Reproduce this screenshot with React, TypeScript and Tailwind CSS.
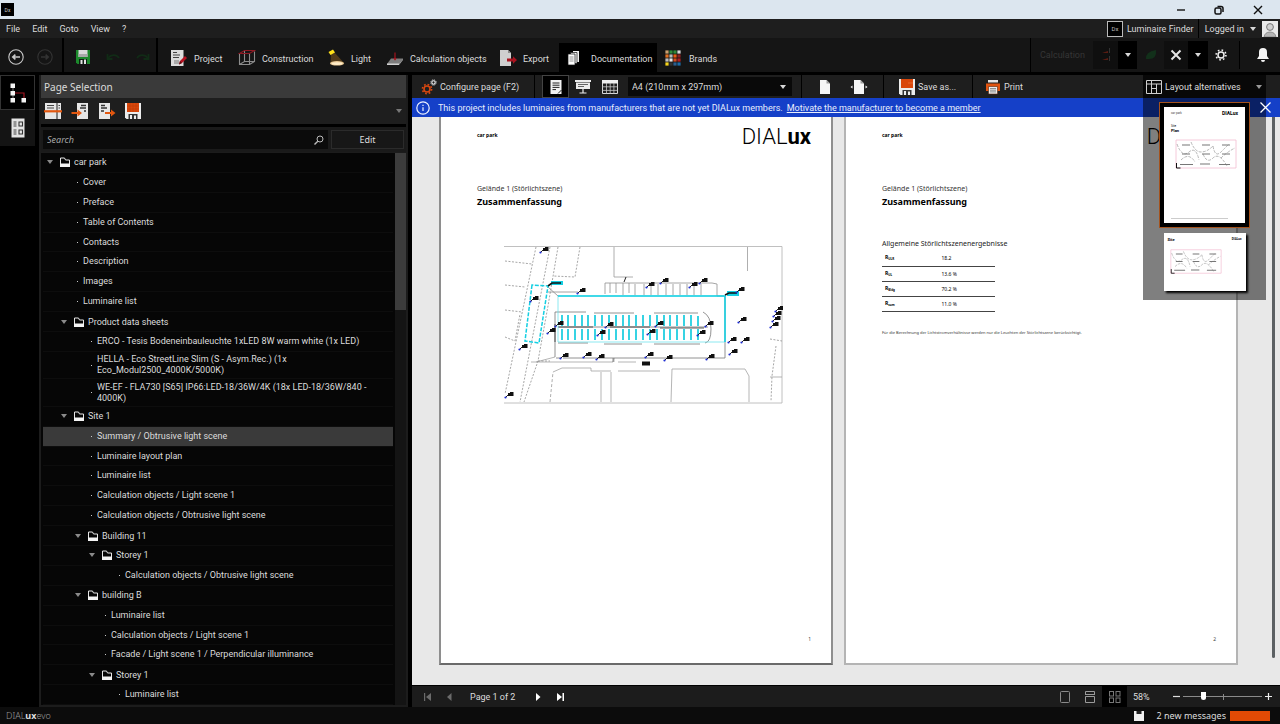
import type { ReactNode } from "react";

/* ---------- small icons ---------- */

const BackIcon = ({ flip = false }: { flip?: boolean }) => (
  <svg viewBox="0 0 16 16" className={flip ? "size-4 rotate-180 text-[#333]" : "size-4 text-[#c9c9c9]"} fill="none" stroke="currentColor">
    <circle cx="8" cy="8" r="7.2" strokeWidth="1.1" />
    <path d="M12 8H5M7.4 5.6 4.8 8l2.6 2.4" strokeWidth="1.6" />
  </svg>
);

const SaveIcon = () => (
  <svg viewBox="0 0 16 16" className="size-4">
    <path d="M1 1h14v14H2.500L1 13.500z" fill="#1c8a2c" />
    <path d="M3.500 1h9v7h-9z" fill="#d9d9d9" />
    <path d="M3.500 5h9v3h-9z" fill="#a9a9a9" />
    <path d="M4 10h8v5H4z" fill="#0d1f10" />
    <path d="M5.500 11h2v4h-2zM9 10.500h2V15H9z" fill="#e2e2e2" />
  </svg>
);

const UndoIcon = ({ flip = false }: { flip?: boolean }) => (
  <svg viewBox="0 0 16 10" className={flip ? "h-2.5 w-4 -scale-x-100" : "h-2.5 w-4"} fill="none" stroke="#112b16" strokeWidth="1.8">
    <path d="M3 6c3-3.500 8-4 11 0" />
    <path d="M2.500 2v5h5" />
  </svg>
);

const ProjectIcon = () => (
  <svg viewBox="0 0 18 18" className="size-[18px]">
    <path d="M1 1h12.500v16H1z" fill="#dcdcdc" />
    <path d="M3 3.500h4M3 6h7M3 8.500h6" stroke="#444" strokeWidth="1" />
    <path d="M4 11h5v4H4z" fill="#aaa" />
    <path d="m9 15.500 1-3.500 5-5 2 2-5 5z" fill="#b81222" />
    <path d="m9 15.500 1-3.500 2 2z" fill="#5a0c10" />
  </svg>
);

const CubeIcon = () => (
  <svg viewBox="0 0 18 18" className="size-[18px]" fill="none" strokeWidth="1.1">
    <path d="M1.500 4.500v11h10v-11M11.500 15.500l5-3v-10M1.500 15.500l5-3h10M6.500 2v10.500" stroke="#8c8c8c" />
    <path d="M1.500 4.500h10l5-3h-10z" stroke="#8e1a24" />
  </svg>
);

const LightIcon = () => (
  <svg viewBox="0 0 18 18" className="size-[18px]">
    <path d="M4 5 3.500 14.500h14L8 4z" fill="#6b4a1c" opacity=".7" />
    <ellipse cx="10" cy="14.300" rx="7" ry="2.300" fill="#e8c894" />
    <ellipse cx="10" cy="14.600" rx="5.500" ry="1.400" fill="#ffecc8" />
    <path d="m1.500 3 4.500-2.500 2 3-4.500 2.500z" fill="#ffe11a" />
  </svg>
);

const PlaneIcon = () => (
  <svg viewBox="0 0 18 18" className="size-[18px]">
    <path d="M5 9.500h12l-4 5.500H1z" fill="#7c7c7c" />
    <path d="M1 14.500h12v1.500H1z" fill="#d0d0d0" />
    <path d="m13 14.500 4-5v1.500l-4 5z" fill="#a0a0a0" />
    <path d="M9 3.500v7" stroke="#a3141e" strokeWidth="1.200" />
    <path d="m7.300 9 1.700 2.700L10.700 9z" fill="#a3141e" />
  </svg>
);

const ExportIcon = () => (
  <svg viewBox="0 0 18 18" className="size-[18px]">
    <path d="M1 1h8l3 3v13H1z" fill="#cfcfcf" />
    <path d="M9 1v3h3z" fill="#8b8b8b" />
    <path d="M8 9.500h6V7.300l4 3.700-4 3.700v-2.200H8z" fill="#a8121e" />
  </svg>
);

const DocsIcon = () => (
  <svg viewBox="0 0 14 16" className="h-4 w-3.5">
    <path d="M6 1h6v11H6z" fill="#f4f4f4" />
    <path d="M3.500 2.500H10v11H3.500z" fill="#f4f4f4" stroke="#111" strokeWidth=".7" />
    <path d="M1 4h7v11H1z" fill="#fff" stroke="#111" strokeWidth=".7" />
    <path d="M2.500 7h4M2.500 9h4M2.500 11h4" stroke="#777" strokeWidth=".8" />
  </svg>
);

const BRAND_COLORS = [
  "#c9a070", "#2e8b3a", "#2e8b3a", "#d8d8d8",
  "#e07020", "#b8b8b8", "#e85a10", "#8c2020",
  "#bdbdbd", "#e8e8e8", "#d04a20", "#b02020",
  "#f4d21a", "#303030", "#2a5f90", "#1c6ca6",
];

const BrandsIcon = () => (
  <svg viewBox="0 0 16 16" className="size-4">
    {BRAND_COLORS.map((c, i) => (
      <rect key={i} x={(i % 4) * 4 + 0.4} y={Math.floor(i / 4) * 4 + 0.4} width="3.200" height="3.200" fill={c} />
    ))}
  </svg>
);

const GearsIcon = () => (
  <svg viewBox="0 0 16 16" className="size-4" fill="none">
    <circle cx="6" cy="10" r="3" stroke="#d9470f" strokeWidth="1.600" />
    <circle cx="6" cy="10" r="4.600" stroke="#d9470f" strokeWidth="1.600" strokeDasharray="1.700 1.913" />
    <circle cx="12.500" cy="3.500" r="1.700" stroke="#eee" strokeWidth="1.100" />
    <circle cx="12.500" cy="3.500" r="2.700" stroke="#ddd" strokeWidth="1" strokeDasharray="1.060 1.060" />
  </svg>
);

const FloppyIcon = ({ lined = false }: { lined?: boolean }) => (
  <svg viewBox="0 0 16 16" className="size-4">
    <path d="M0 0h16v16H1.500L0 14.500z" fill="#ececec" />
    <path d="M2 0h12v9H2z" fill="#d9470b" />
    <path d={lined ? "M2 3h12M2 6h12M5 0v9M8 0v9M11 0v9" : "M9 4h5"} stroke={lined ? "#b83a06" : "#f08a54"} strokeWidth=".5" />
    <path d="M3.500 11h9v5h-9z" fill="#333" />
    <path d="M5 12h2v4H5zM9 12.500h2V16H9z" fill="#eee" />
  </svg>
);

const PrinterIcon = () => (
  <svg viewBox="0 0 16 16" className="size-4">
    <path d="M3 1h10v2.500H3z" fill="#e4e4e4" />
    <path d="M1 4.500h14V12H1z" fill="#e2540f" />
    <path d="M3.500 7.500h9V15h-9z" fill="#ececec" stroke="#5a2408" strokeWidth=".6" />
    <path d="M5 9.500h6M5 11.200h6M5 12.900h6" stroke="#777" strokeWidth=".8" />
  </svg>
);

const FolderIcon = () => (
  <svg viewBox="0 0 10 10" className="h-2.5 w-2.5 shrink-0">
    <path d="M.500 7V1h4l1 2h4v4" fill="none" stroke="#e6e6e6" />
    <path d="M0 6.500h10V10H0z" fill="#f4f4f4" />
  </svg>
);

const Caret = ({ className = "text-[#d8d8d8]" }: { className?: string }) => (
  <svg viewBox="0 0 6 4" className={"h-[4px] w-[6px] shrink-0 " + className}>
    <path d="M0 0h6L3 4z" fill="currentColor" />
  </svg>
);

const SheetIcon = () => (
  <svg viewBox="0 0 12 14" className="h-3.5 w-3">
    <path d="M.500 0h11v14H.500z" fill="#f2f2f2" />
    <path d="M2.500 3h7M2.500 5.200h7M2.500 7.400h7M2.500 9.600h3.500" stroke="#222" strokeWidth="1" />
    <path d="M8 13.500 11.500 10" stroke="#222" />
  </svg>
);

const ScreenIcon = () => (
  <svg viewBox="0 0 16 14" className="h-3.5 w-4">
    <path d="M0 0h16v2H0zM1 2.500h14V9H1z" fill="#ededed" />
    <path d="M3 4.500h10M3 6.500h6" stroke="#555" strokeWidth=".9" />
    <path d="M8 9v4M4.500 13h7" stroke="#ededed" strokeWidth="1.200" />
  </svg>
);

const TableIcon = () => (
  <svg viewBox="0 0 16 14" className="h-3.5 w-4">
    <path d="M.500.500h15v13H.500z" fill="none" stroke="#d8d8d8" />
    <path d="M0 0h16v3.500H0z" fill="#eee" />
    <path d="M4.500 3v11M8.200 3v11M11.900 3v11M0 6.800h16M0 10.400h16" stroke="#c8c8c8" strokeWidth=".8" />
  </svg>
);

const PageIcon = ({ arrows = false }: { arrows?: boolean }) => (
  <svg viewBox="0 0 18 14" className="h-3.5 w-[18px]">
    <path d="M4 0h6.500L14 3.500V14H4z" fill="#f6f6f6" />
    <path d="M10.500 0v3.500H14z" fill="#9b9b9b" />
    {arrows && <path d="M2.500 5.500v3L.500 7zM15.500 5.500v3L17.500 7z" fill="#f6f6f6" />}
  </svg>
);

const LayoutIcon = () => (
  <svg viewBox="0 0 16 14" className="h-3.5 w-4" fill="none" stroke="#cfcfcf">
    <path d="M.500.500h15v13H.500zM5.500.500v13M.500 4h15M5.500 8.500h5M10.500 4v9.500" />
  </svg>
);

const ImportPageIcon = ({ out = false }: { out?: boolean }) => (
  <svg viewBox="0 0 18 16" className="h-4 w-[18px]">
    <path d={out ? "M1 0h11v16H1z" : "M6 0h11v16H6z"} fill="#e6e6e6" />
    <path d={out ? "M3 2.500h4M3 5h6M3 8h3" : "M10 2.500h5M9 5h6M13 8h2"} stroke="#333" strokeWidth="1.300" />
    <path d={out ? "M7 9h6V6.500l4.500 3.500-4.500 3.500V11H7z" : "M.500 9h6V6.500L11 10l-4.500 3.500V11h-6z"} fill="#e2570f" />
  </svg>
);

const SplitPageIcon = () => (
  <svg viewBox="0 0 18 16" className="h-4 w-[18px]">
    <path d="M1 0h11.500v16H1zM13.500 0H17v16h-3.500z" fill="#e6e6e6" />
    <path d="M3 2.500h7M3 5h7M14.500 2.500H16M14.500 5H16" stroke="#444" strokeWidth="1.200" />
    <path d="M0 8.300h18" stroke="#e2570f" strokeWidth="2.200" />
  </svg>
);

const TreeViewIcon = () => (
  <svg viewBox="0 0 18 22" className="h-[22px] w-[18px]">
    <path d="M4 4v14" stroke="#777" />
    <path d="M6 11h9v5" fill="none" stroke="#a01420" strokeWidth="1.200" />
    <path d="M1.500 1.500h4.500V6H1.500zM1.500 9h4.500v4.500H1.500zM1.500 16h4.500v4.500H1.500zM12.500 16H17v4.500h-4.500z" fill="#f4f4f4" />
  </svg>
);

const GridViewIcon = () => (
  <svg viewBox="0 0 14 20" className="h-5 w-3.5">
    <path d="M.500.500h13v19H.500z" fill="#e4e4e4" />
    <path d="M2.500 4h3M2.500 6h3M2.500 8h3M2.500 12h3M2.500 14h3M2.500 16h3" stroke="#444" strokeWidth="1" />
    <path d="M8 4h3.500v4H8zM8 12h3.500v4H8z" fill="none" stroke="#333" strokeWidth="1.100" />
  </svg>
);

/* ---------- drawings ---------- */

const PLAN_MARKS: [number, number][] = [
  [39, 3], [76, 44], [29, 52], [54, 77], [46, 84], [104, 78], [96, 86], [154, 77], [146, 85],
  [204, 77], [196, 86], [59, 109], [82, 108], [95, 110], [144, 108], [163, 111], [205, 110],
  [145, 38], [159, 34], [188, 38], [198, 34], [235, 43], [237, 73], [227, 93], [240, 93],
  [228, 105], [274, 62], [272, 67], [271, 72], [269, 78], [18, 100], [4, 148],
];

const SitePlan = () => (
  <svg viewBox="0 0 279 158" className="h-[158px] w-[279px]" fill="none" strokeWidth=".8">
    <path d="M0 .500h278V157H0" stroke="#b0b0b0" />
    <path d="M110 1v30h19M243.500 1v24" stroke="#9a9a9a" />
    <path d="M49 126l9-4h29v3h20M97 126v30M107 126v30M114 125h42M167 156l1-33h73l4 7v26M27 116h82l1-4v4M114 116h18M32 116l19-5M266 131h12" stroke="#a2a2a2" />
    <path d="M46 156l3-30" stroke="#999" strokeDasharray="3 2" />
    <path d="M44 41l10 9M44 46h30" stroke="#8a8a8a" />
    <path d="M101 48V37h107l5 1v12h7M106 37v10M112 37v10M119 37v12M125 37v10M131 38v11M140 38v11M147 38v11M154 38v11M162 38v11M169 38v11M176 38v11M183 38v11M190 38v11M197 38v11" stroke="#8f8f8f" />
    <path d="M51 66v45M51 66h31M90 67h40M150 67h44M54 97h30M100 98h38M150 98h46M54 81h150M59 112h162V50M52 112h5M109 112v4M199 66q8 4 8 17t-6 14" stroke="#777" />
    <path d="M54 81h35M106 81h40M156 82h44M51 78v18" stroke="#333" />
    <path d="M1 15l27 3M1 39l20 2M1 64l17 2M1 91l10 4 5-27M32 1 1 148M46 1 16 156M54 1 44 60 34 115 20 156M76 1l-5 30-22-1M266 93l12 2M272 100l-4 30-1 25M34 115h12" stroke="#8f8f8f" strokeDasharray="2 1.500" />
    <path d="M54 50h167v46H54z" stroke="#6fe3ee" />
    <path d="M54 50h167v46" stroke="#14cfe2" strokeWidth="1.500" />
    <path d="M28 39 21 95l14 2 9-57z" stroke="#14cfe2" strokeWidth="1.500" strokeDasharray="4 1.500" />
    <path d="M58 69v11M64 69v11M71 69v11M78 69v11M84 69v11M91 69v11M98 69v11M105 69v11M112 69v11M119 69v11M125 69v11M132 69v11M139 69v11M146 69v11M153 69v11M160 69v11M166 69v11M173 69v11M180 69v11M187 69v11M194 70v10M58 83v11M64 83v11M71 83v11M78 83v11M84 83v11M91 83v11M98 83v11M105 83v11M112 83v11M119 83v11M125 83v11M132 83v11M139 83v11M146 83v11M153 83v11M160 83v11M166 83v11M173 83v11M180 83v11M187 83v11M194 83v11" stroke="#22cfe0" strokeWidth="1.800" />
    <path d="M47 35h12v4H47zM223 45h12v5h-12z" fill="#14cfe2" />
    <path d="M44 40l4-3h9M221 49l4-2h8" stroke="#111" strokeWidth="1.600" />
    {PLAN_MARKS.map(([x, y], i) => (
      <g key={i}>
        <path d={`M${x - 3} ${y + 4}l4-4`} stroke="#222" strokeWidth="1" />
        <path d={`M${x} ${y - 1}h2v-1h3.500v4H${x}z`} fill="#111" />
        <circle cx={x - 2.5} cy={y + 3.5} r="1.100" fill="#1c2bd0" />
      </g>
    ))}
    <path d="M122 31l-2 5" stroke="#222" strokeWidth="1" />
    <path d="M138 117.500h8" stroke="#111" strokeWidth="4" />
  </svg>
);

const MiniPlan = ({ className }: { className: string }) => (
  <svg viewBox="0 0 62 32" className={className} fill="none">
    <path d="M1 2h60v28H1z" stroke="#f3bcd0" strokeWidth=".8" />
    <path d="M2 6q5 14 12 8t10 8M16 4q4 10 10 10t12-6M38 8q2 12 8 6t8-8M28 16q4 10 10 4t14 8M6 22q8-8 14 2M46 20q6-6 14-10" stroke="#9a9a9a" strokeWidth=".7" strokeDasharray="3 1.200" />
    <path d="M7 7h8M27 7h8M47 7h8M7 16h8M27 16h8M47 16h8M5 26.500h13M25 26h10M44 26.500h11" stroke="#777" strokeWidth="1.200" />
    <path d="M1.500 25v5h4" stroke="#111" strokeWidth="1" />
  </svg>
);

/* ---------- page tree ---------- */

type Row = { text: string; level: string; folder?: boolean; tall?: boolean; selected?: boolean };

const L0 = "pl-[4px]";
const L1 = "pl-[18px]";
const L1L = "pl-[34px]";
const L2 = "pl-[32px]";
const L2L = "pl-[48px]";
const L3 = "pl-[46px]";
const L3L = "pl-[62px]";
const L4L = "pl-[76px]";

const ROWS: Row[] = [
  { text: "car park", level: L0, folder: true },
  { text: "Cover", level: L1L },
  { text: "Preface", level: L1L },
  { text: "Table of Contents", level: L1L },
  { text: "Contacts", level: L1L },
  { text: "Description", level: L1L },
  { text: "Images", level: L1L },
  { text: "Luminaire list", level: L1L },
  { text: "Product data sheets", level: L1, folder: true },
  { text: "ERCO - Tesis Bodeneinbauleuchte 1xLED 8W warm white (1x LED)", level: L2L },
  { text: "HELLA - Eco StreetLine Slim (S - Asym.Rec.) (1x\nEco_Modul2500_4000K/5000K)", level: L2L, tall: true },
  { text: "WE-EF - FLA730 [S65] IP66:LED-18/36W/4K (18x LED-18/36W/840 -\n4000K)", level: L2L, tall: true },
  { text: "Site 1", level: L1, folder: true },
  { text: "Summary / Obtrusive light scene", level: L2L, selected: true },
  { text: "Luminaire layout plan", level: L2L },
  { text: "Luminaire list", level: L2L },
  { text: "Calculation objects / Light scene 1", level: L2L },
  { text: "Calculation objects / Obtrusive light scene", level: L2L },
  { text: "Building 11", level: L2, folder: true },
  { text: "Storey 1", level: L3, folder: true },
  { text: "Calculation objects / Obtrusive light scene", level: L4L },
  { text: "building B", level: L2, folder: true },
  { text: "Luminaire list", level: L3L },
  { text: "Calculation objects / Light scene 1", level: L3L },
  { text: "Facade / Light scene 1 / Perpendicular illuminance", level: L3L },
  { text: "Storey 1", level: L3, folder: true },
  { text: "Luminaire list", level: L4L },
];

const TreeRow = ({ row }: { row: Row }) => (
  <li
    className={
      "flex min-h-0 basis-0 items-center border-b border-[#0d0d0d] " +
      row.level +
      (row.tall ? " grow-[28]" : " grow-[20]") +
      (row.selected ? " bg-[#3a3a3a]" : "")
    }
  >
    {row.folder ? (
      <button type="button" className="flex items-center">
        <Caret className="text-[#8a8a8a]" />
        <span className="ml-[7px] flex"><FolderIcon /></span>
        <span className="ml-1">{row.text}</span>
      </button>
    ) : (
      <button type="button" className="flex items-center text-left">
        <span className="mr-[5px] size-px shrink-0 bg-[#c8c8c8]" />
        <span className="whitespace-pre leading-[11px]">{row.text}</span>
      </button>
    )}
  </li>
);

const Side = () => (
  <aside className="flex w-[369px] shrink-0 flex-col border-x-2 border-b-2 border-[#1c1c1c] bg-[#0a0a0a]">
    <h2 className="flex h-[23px] shrink-0 items-center bg-[#3a3a3a] pl-[3px] font-['Noto_Sans',sans-serif] text-[10px]">Page Selection</h2>
    <div className="flex h-[27px] shrink-0 items-center gap-[9px] border-b border-black bg-[#1e1e1e] pr-1 pl-[3px]">
      <button type="button" aria-label="Insert page break"><SplitPageIcon /></button>
      <button type="button" aria-label="Import page"><ImportPageIcon /></button>
      <button type="button" aria-label="Export page"><ImportPageIcon out /></button>
      <button type="button" aria-label="Save template"><FloppyIcon lined /></button>
      <button type="button" aria-label="More" className="ml-auto"><Caret className="text-[#777]" /></button>
    </div>
    <div className="flex h-[27px] shrink-0 items-center gap-[3px] border-t-2 border-black bg-[#1a1a1a] px-[2px]">
      <label className="flex h-[19px] grow items-center bg-[#0b0b0b] px-1">
        <input aria-label="Search" placeholder="Search" className="min-w-0 grow bg-transparent font-['Noto_Sans',sans-serif] italic outline-none placeholder:text-[#a8a8a8]" />
        <svg viewBox="0 0 10 10" className="size-2.5" fill="none" stroke="#bbb"><circle cx="6" cy="4" r="3" /><path d="M3.800 6.200.500 9.500" strokeWidth="1.400" /></svg>
      </label>
      <button type="button" className="h-[19px] w-[73px] border border-[#2b2b2b] bg-[#171717] font-['Noto_Sans',sans-serif]">Edit</button>
    </div>
    <div className="flex min-h-0 grow gap-[2px] border-t border-[#1c1c1c] bg-[#060606]">
      <ul className="flex min-w-0 grow flex-col pl-[2px]">
        {ROWS.map((r, i) => <TreeRow key={i} row={r} />)}
      </ul>
      <div className="w-[11px] shrink-0 bg-[#141414]"><div className="h-[157px] bg-[#3c3c3c]" /></div>
    </div>
  </aside>
);

/* ---------- top bars ---------- */

const ModeButton = ({ icon, label, width, active = false }: { icon: ReactNode; label: string; width: string; active?: boolean }) => (
  <button type="button" className={"flex h-[29px] shrink-0 items-center pl-2 " + width + (active ? " bg-black" : "")}>
    <span className="flex w-6 items-center">{icon}</span>
    <span className="pt-0.5">{label}</span>
  </button>
);

const Tool = ({ label, width, className = "", children }: { label: string; width: string; className?: string; children: ReactNode }) => (
  <button type="button" aria-label={label} className={"flex h-full shrink-0 items-center justify-center " + width + " " + className}>{children}</button>
);

const Header = () => (
  <header className="shrink-0">
    <div className="flex h-[19px] items-center justify-between bg-[#dce6ef] pl-px">
      <span className="flex size-[13px] items-center justify-center bg-black text-[5px] text-[#ccc]">Dx</span>
      <div className="flex items-center pr-[2px] text-[#111]">
        <button type="button" aria-label="Minimize" className="flex w-[38px] justify-center"><svg viewBox="0 0 10 10" className="size-2.5" stroke="currentColor" strokeWidth="1.400"><path d="M1 5h8" /></svg></button>
        <button type="button" aria-label="Restore" className="flex w-[38px] justify-center"><svg viewBox="0 0 10 10" className="size-2.5" fill="none" stroke="currentColor" strokeWidth="1.500"><rect x="1" y="3" width="6" height="6" rx="1.500" /><path d="M3.500 1.500h3.500a2 2 0 0 1 2 2V7" /></svg></button>
        <button type="button" aria-label="Close" className="flex w-10 justify-center"><svg viewBox="0 0 10 10" className="size-2.5" stroke="currentColor" strokeWidth="1.400"><path d="m1 1 8 8M9 1 1 9" /></svg></button>
      </div>
    </div>
    <div className="flex h-[19px] items-center bg-[#1e1e1e] pl-[6px]">
      <nav className="flex gap-[12px]">
        {["File", "Edit", "Goto", "View", "?"].map((m) => <button key={m} type="button">{m}</button>)}
      </nav>
      <div className="ml-auto flex h-full items-center pr-0.5">
        <button type="button" className="flex h-full items-center gap-1 border-r border-black pr-1">
          <span className="flex size-4 items-center justify-center border border-[#bbb] bg-black text-[6px] text-[#bbb]">Dx</span>
          Luminaire Finder
        </button>
        <button type="button" className="flex h-full items-center gap-[6px] pl-[6px]">
          Logged in <Caret />
          <svg viewBox="0 0 16 16" className="size-4"><path d="M0 0h16v16H0z" fill="#e9e9e9" /><circle cx="8" cy="6" r="3.400" fill="#d0d0d0" stroke="#777" /><path d="M2 16q1-5 6-5t6 5z" fill="#b5b5b5" stroke="#777" strokeWidth=".7" /></svg>
        </button>
      </div>
    </div>
    <div className="flex h-[34px] items-center bg-[#151515]">
      <div className="flex h-full w-[64px] shrink-0 items-center gap-[13px] border-r-2 border-black pl-[8px] pt-1">
        <button type="button" aria-label="Back"><BackIcon /></button>
        <button type="button" aria-label="Forward"><BackIcon flip /></button>
      </div>
      <div className="flex h-full w-[94px] shrink-0 items-center gap-[14px] border-r-2 border-black pl-[11px] pt-1">
        <button type="button" aria-label="Save"><SaveIcon /></button>
        <button type="button" aria-label="Undo"><UndoIcon /></button>
        <button type="button" aria-label="Redo"><UndoIcon flip /></button>
      </div>
      <div className="flex h-full items-end pl-1">
        <ModeButton icon={<ProjectIcon />} label="Project" width="w-[68px]" />
        <ModeButton icon={<CubeIcon />} label="Construction" width="w-[89px]" />
        <ModeButton icon={<LightIcon />} label="Light" width="w-[59px]" />
        <ModeButton icon={<PlaneIcon />} label="Calculation objects" width="w-[113px]" />
        <ModeButton icon={<ExportIcon />} label="Export" width="w-[68px]" />
        <ModeButton icon={<DocsIcon />} label="Documentation" width="w-[98px]" active />
        <ModeButton icon={<BrandsIcon />} label="Brands" width="w-[80px]" />
      </div>
      <div className="ml-auto flex h-full items-center border-l border-black py-[3px]">
        <span className="w-[62px] pl-[9px] text-[#353535]">Calculation</span>
        <Tool label="Start calculation" width="w-[25px]" className="bg-[#0f0f0f]">
          <svg viewBox="0 0 10 14" className="h-3.5 w-2.5"><path d="M1 5l6-2v2zM1 12l6-2v2z" fill="#5a1c12" /><path d="M8.500 0v5M8.500 8v5" stroke="#333" /></svg>
        </Tool>
        <Tool label="Calculation options" width="w-[19px]" className="bg-black"><Caret /></Tool>
        <Tool label="Energy" width="w-[27px]"><svg viewBox="0 0 12 12" className="size-3"><path d="M1 10Q0 3 11 1q1 9-7 9-2 0-3 0z" fill="#12301a" /></svg></Tool>
        <Tool label="Tools" width="w-[24px]" className="bg-[#0f0f0f]"><svg viewBox="0 0 12 12" className="size-3" stroke="#e4e4e4" strokeWidth="2"><path d="m1.500 1.500 9 9M10.500 1.500l-9 9" /></svg></Tool>
        <Tool label="Tool options" width="w-[20px]" className="bg-black"><Caret /></Tool>
        <Tool label="Settings" width="w-[32px]" className="border-r border-black pr-1.5">
          <svg viewBox="0 0 12 12" className="size-3" fill="none" stroke="#f0f0f0"><circle cx="6" cy="6" r="3" strokeWidth="1.500" /><circle cx="6" cy="6" r="4.900" strokeWidth="1.600" strokeDasharray="1.600 2.248" /></svg>
        </Tool>
        <Tool label="Notifications" width="w-[40px]" className="pl-1.5">
          <svg viewBox="0 0 12 14" className="h-3.5 w-3"><path d="M6 0a4 4 0 0 1 4 4v4l2 3H0l2-3V4a4 4 0 0 1 4-4zM4 12h4a2 2 0 0 1-4 0z" fill="#f4f4f4" /></svg>
        </Tool>
      </div>
    </div>
  </header>
);

/* ---------- document area ---------- */

const Banner = () => (
  <div role="status" className="flex h-[19px] shrink-0 items-center bg-[#1540c8] pl-1 text-[#e8eefc]">
    <svg viewBox="0 0 14 14" className="mr-2 size-3.5" fill="none" stroke="#eef3ff"><circle cx="7" cy="7" r="6.200" strokeWidth="1.200" /><path d="M7 6.200V10M7 3.800V5" strokeWidth="1.200" /></svg>
    <span>This project includes luminaires from manufacturers that are not yet DIALux members.</span>
    <a href="#member" className="ml-1 underline">Motivate the manufacturer to become a member</a>
  </div>
);

const Logo = () => (
  <span className="font-[Roboto,sans-serif] text-[22px] leading-6 font-light">DIAL<b className="font-bold">ux</b></span>
);

const Sheet = ({ page, edge, children }: { page: number; edge: string; children: ReactNode }) => (
  <article className={"flex h-[548px] w-[394px] shrink-0 flex-col border-2 border-t-0 bg-white font-['Noto_Sans',sans-serif] text-black " + edge}>
    <div className="flex h-[36px] items-start justify-between pt-[8px] pr-[20px] pl-[36px]">
      <span className="pt-[3px] text-[5px] leading-[14px] font-bold">car park</span>
      <Logo />
    </div>
    <div className="flex grow flex-col items-start pl-[36px]">
      <p className="mt-[29px] text-[7px] leading-[14px] text-[#333]">Gelände 1 (Störlichtszene)</p>
      <h3 className="text-[9px] leading-3 font-bold">Zusammenfassung</h3>
      {children}
    </div>
    <footer className="flex justify-end pr-[20px] pb-[18px] text-[5px] leading-3 text-[#444]">{page}</footer>
  </article>
);

const RESULTS: [string, string][] = [["ULR", "18.2"], ["UL", "13.6 %"], ["Bldg", "70.2 %"], ["sum", "11.0 %"]];

const LayoutPopover = () => (
  <div className="absolute top-[23px] right-[14px] z-10 flex h-[202px] w-[123px] flex-col items-center gap-[5px] bg-black/50 pt-1">
    <button type="button" aria-label="Portrait layout" className="w-[91px] border border-[#a4521c] bg-black p-1">
      <span className="flex h-[116px] flex-col bg-white px-[7px] pt-[3px] pb-1 text-left text-black">
        <span className="flex justify-between text-[3px] leading-[6px] text-[#444]"><span>car park</span><b className="text-[5px] text-black">DIALux</b></span>
        <span className="mt-[8px] text-[3px] leading-[4px]">Site</span>
        <b className="text-[4px] leading-[5px]">Plan</b>
        <MiniPlan className="mt-[5px] ml-[4px] h-[32px] w-[62px]" />
        <span className="mt-auto h-px w-[57px] bg-[#ccc]" />
      </span>
    </button>
    <button type="button" aria-label="Landscape layout" className="flex h-[58px] w-[82px] flex-col bg-white px-1 pt-1 text-black shadow-[2px_2px_2px_#000]">
      <span className="flex w-full justify-between text-[4px] leading-[5px]"><b>Site</b><b className="text-[3px]">DIALux</b></span>
      <MiniPlan className="mt-[6px] ml-[2px] h-[27px] w-[52px]" />
    </button>
  </div>
);

const DocToolbar = () => (
  <div className="flex h-[23px] shrink-0 items-center bg-[#1e1e1e]">
    <button type="button" className="flex h-full w-[123px] items-center gap-[3px] border-r border-black pl-[9px]">
      <GearsIcon />Configure page (F2)
    </button>
    <div className="flex h-full items-center pl-[7px]">
      <Tool label="Page view" width="w-[27px]" className="border border-[#444] bg-black"><SheetIcon /></Tool>
      <Tool label="Presentation view" width="w-[27px]"><ScreenIcon /></Tool>
      <Tool label="Table view" width="w-[28px]"><TableIcon /></Tool>
    </div>
    <label className="relative ml-[4px] flex h-[19px] w-[164px] items-center bg-[#090909]">
      <select aria-label="Paper size" className="h-full w-full appearance-none bg-transparent pl-1 outline-none" defaultValue="a4">
        <option value="a4">A4 (210mm x 297mm)</option>
      </select>
      <span className="pointer-events-none absolute right-[6px]"><Caret /></span>
    </label>
    <div className="ml-[9px] flex h-full items-center border-l border-black">
      <Tool label="Portrait" width="w-[46px]"><PageIcon /></Tool>
      <Tool label="Page width" width="w-[22px]"><PageIcon arrows /></Tool>
    </div>
    <button type="button" className="ml-[13px] flex h-full w-[90px] items-center gap-[3px] border-x border-black pl-[15px]"><FloppyIcon />Save as...</button>
    <button type="button" className="flex h-full items-center gap-[3px] pl-[12px]"><PrinterIcon />Print</button>
    <button type="button" className="mr-[14px] ml-auto flex h-full w-[123px] items-center gap-[3px] bg-[#080808] pl-[3px]">
      <LayoutIcon />Layout alternatives
      <span className="mr-1 ml-auto flex"><Caret className="text-[#999]" /></span>
    </button>
  </div>
);

const Pager = () => (
  <div className="flex h-[22px] shrink-0 items-center border-t border-black bg-[#1c1c1c] pr-[8px] pl-[12px]">
    <div className="flex items-center">
      <button type="button" aria-label="First page"><svg viewBox="0 0 8 8" className="size-2" fill="#6b6b6b"><path d="M0 0h1.200v8H0zM7 0v8L2 4z" /></svg></button>
      <button type="button" aria-label="Previous page" className="ml-[14px]"><svg viewBox="0 0 8 8" className="size-2" fill="#6b6b6b"><path d="M5.500 0v8L1 4z" /></svg></button>
      <span className="ml-[16px] w-[66px]">Page 1 of 2</span>
      <button type="button" aria-label="Next page"><svg viewBox="0 0 8 8" className="size-2" fill="#fff"><path d="M0 0v8l4.500-4z" /></svg></button>
      <button type="button" aria-label="Last page" className="ml-[13px]"><svg viewBox="0 0 8 8" className="size-2" fill="#fff"><path d="M0 0v8l5-4zM5.500 0H7v8H5.500z" /></svg></button>
    </div>
    <div className="ml-auto flex h-full items-center">
      <Tool label="Single page" width="w-[25px]"><svg viewBox="0 0 10 12" className="h-3 w-2.5" fill="none" stroke="#8a8a8a"><rect x=".5" y=".5" width="9" height="11" rx="1" /></svg></Tool>
      <Tool label="Continuous" width="w-[25px]"><svg viewBox="0 0 10 12" className="h-3 w-2.5" fill="none" stroke="#9a9a9a"><path d="M.500 3.500V.500h9v3M.500 5.500h9v6h-9zM0 3.500h10" /></svg></Tool>
      <Tool label="Grid" width="w-[25px]" className="bg-black"><svg viewBox="0 0 12 12" className="size-3" fill="none" stroke="#777"><rect x=".5" y=".5" width="4" height="4.500" /><rect x="7" y=".5" width="4" height="4.500" /><rect x=".5" y="7" width="4" height="4.500" /><rect x="7" y="7" width="4" height="4.500" /></svg></Tool>
      <span className="ml-[6px] w-[40px]">58%</span>
      <button type="button" aria-label="Zoom out" className="flex"><svg viewBox="0 0 7 7" className="size-[7px]" stroke="#ddd" strokeWidth="1.200"><path d="M0 3.500h7" /></svg></button>
      <label className="relative mx-[3px] flex items-center">
        <input
          type="range"
          aria-label="Zoom"
          min={0}
          max={100}
          defaultValue={24}
          className="h-3 w-[79px] appearance-none bg-transparent [&::-webkit-slider-runnable-track]:h-px [&::-webkit-slider-runnable-track]:bg-[#8a8a8a] [&::-webkit-slider-thumb]:-mt-1 [&::-webkit-slider-thumb]:h-2 [&::-webkit-slider-thumb]:w-[5px] [&::-webkit-slider-thumb]:appearance-none [&::-webkit-slider-thumb]:rounded-b-sm [&::-webkit-slider-thumb]:bg-white"
        />
        <span className="pointer-events-none absolute left-1/2 h-[6px] w-px bg-[#8a8a8a]" />
      </label>
      <button type="button" aria-label="Zoom in" className="flex"><svg viewBox="0 0 7 7" className="size-[7px]" stroke="#eee" strokeWidth="1.200"><path d="M0 3.500h7M3.500 0v7" /></svg></button>
    </div>
  </div>
);

const DocumentArea = () => (
  <main className="relative flex min-w-0 grow flex-col">
    <DocToolbar />
    <Banner />
    <LayoutPopover />
    <button type="button" aria-label="Dismiss message" className="absolute top-[27px] right-[9px] z-20">
      <svg viewBox="0 0 11 11" className="size-[11px]" stroke="#fff" strokeWidth="1.300"><path d="m.5.5 10 10M10.500.5l-10 10" /></svg>
    </button>
    <div className="flex min-h-0 grow overflow-hidden bg-[#e8e8e8]">
      <div className="flex min-w-0 grow items-start gap-[11px] overflow-hidden pl-[27px]">
        <Sheet page={1} edge="border-x-[#8e8e8e] border-b-[#6a6a6a]">
          <div className="mt-[38px] ml-[27px]"><SitePlan /></div>
        </Sheet>
        <Sheet page={2} edge="border-[#b4b4b4]">
          <h4 id="results" className="mt-[29px] h-[14px] text-[7px] leading-[14px] text-[#222]">Allgemeine Störlichtszenenergebnisse</h4>
          <table aria-labelledby="results" className="w-[113px] table-fixed border-collapse text-[5px]">
            <tbody>
              {RESULTS.map(([k, v]) => (
                <tr key={k} className="h-[15px] border-b border-[#444]">
                  <th scope="row" className="pl-[3px] text-left font-bold">R<span className="align-[-1px] text-[3px]">{k}</span></th>
                  <td className="pl-[3px]">{v}</td>
                </tr>
              ))}
            </tbody>
          </table>
          <p className="mt-[15px] text-[4px] leading-3 whitespace-nowrap text-[#333]">Für die Berechnung der Lichtstromverhältnisse werden nur die Leuchten der Störlichtszene berücksichtigt.</p>
        </Sheet>
      </div>
      <div className="mr-[5px] w-[3px] shrink-0"><div className="h-[541px] rounded-b bg-[#5c6063]" /></div>
    </div>
    <Pager />
  </main>
);

export default function App() {
  return (
    <div className="flex h-screen flex-col overflow-hidden bg-black font-[Roboto,sans-serif] text-[9px] leading-3 text-[#dcdcdc]">
      <Header />
      <div className="flex min-h-0 grow gap-[4px] pt-[3px]">
        <div className="flex shrink-0">
          <nav className="flex w-[39px] flex-col pr-[4px]">
            <button type="button" aria-label="Tree view" className="flex h-[35px] items-center justify-center border border-[#333] bg-black"><TreeViewIcon /></button>
            <button type="button" aria-label="Thumbnail view" className="flex h-[36px] items-center justify-center bg-[#141414]"><GridViewIcon /></button>
          </nav>
          <Side />
        </div>
        <DocumentArea />
      </div>
      <footer className="flex h-[17px] shrink-0 items-center justify-between bg-[#0c0c0c] pr-[10px] pl-[6px] font-['Noto_Sans',sans-serif]">
        <span className="font-light text-[#9a9a9a]">DIAL<b className="font-bold text-[#ddd]">ux</b>evo</span>
        <span className="flex items-center">
          <svg viewBox="0 0 10 10" className="mr-[13px] size-2.5"><path d="M0 0h10v10H0z" fill="#f0f0f0" /><path d="M2.500 0h5v3h-5z" fill="#222" /></svg>
          2 new messages
          <span className="ml-1 h-[10px] w-10 bg-[#e24a05]" />
        </span>
      </footer>
    </div>
  );
}
